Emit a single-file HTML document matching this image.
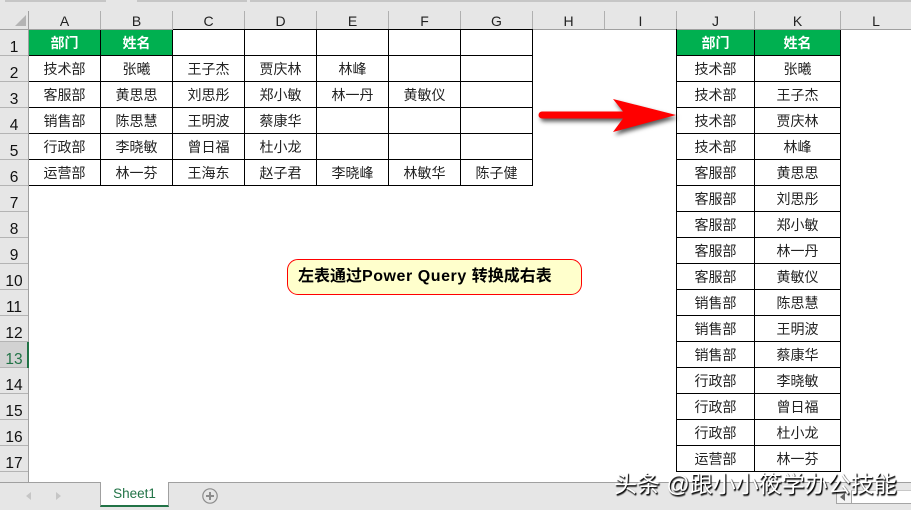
<!DOCTYPE html>
<html><head><meta charset="utf-8"><style>
html,body{margin:0;padding:0;width:911px;height:510px;overflow:hidden;background:#fff}
body{position:relative;font-family:"Liberation Sans","Noto Sans CJK SC",sans-serif;color:#222}
.a{position:absolute}
.ch{position:absolute;top:11px;height:18px;line-height:20px;font-size:14px;text-align:center;border-right:1px solid #b0b0b0;box-sizing:border-box;color:#222}
.rh{position:absolute;left:0;width:28px;height:26px;box-sizing:border-box;border-bottom:1px solid #b4b4b4;font-size:15.5px;text-align:center;line-height:36px;color:#111;overflow:hidden}
table{position:absolute;border-collapse:separate;border-spacing:0;table-layout:fixed;font-size:14px;text-align:center}
td{height:23px;padding:2px 0 0;border-right:1px solid #000;border-bottom:1px solid #000;box-sizing:content-box;line-height:23px;overflow:hidden;white-space:nowrap;color:#222}
td.g{background:#00b050;color:#fff;font-weight:700}
.seg{position:absolute;top:0;height:2px;background:#c6c6c6}
</style></head><body>
<div class="a" style="left:0;top:0;width:911px;height:29px;background:#e6e6e6"></div>
<div class="seg" style="left:5px;width:101px"></div>
<div class="seg" style="left:137px;width:110px"></div>
<div class="seg" style="left:250px;width:661px"></div>
<div class="a" style="left:0;top:29px;width:28px;height:453px;background:#e6e6e6"></div>
<div class="a" style="left:28px;top:11px;width:1px;height:471px;background:#a0a0a0"></div>
<div class="a" style="left:0;top:29px;width:911px;height:1px;background:#a0a0a0"></div>
<svg class="a" style="left:0;top:0" width="28" height="29"><polygon points="15,26 26,15 26,26" fill="#b4b4b4"/></svg>
<div class="ch" style="left:29px;width:72px">A</div>
<div class="ch" style="left:101px;width:72px">B</div>
<div class="ch" style="left:173px;width:72px">C</div>
<div class="ch" style="left:245px;width:72px">D</div>
<div class="ch" style="left:317px;width:72px">E</div>
<div class="ch" style="left:389px;width:72px">F</div>
<div class="ch" style="left:461px;width:72px">G</div>
<div class="ch" style="left:533px;width:72px">H</div>
<div class="ch" style="left:605px;width:72px">I</div>
<div class="ch" style="left:677px;width:78px">J</div>
<div class="ch" style="left:755px;width:86px">K</div>
<div class="ch" style="left:841px;width:70px;border:0">L</div>
<div class="rh" style="top:30px">1</div>
<div class="rh" style="top:56px">2</div>
<div class="rh" style="top:82px">3</div>
<div class="rh" style="top:108px">4</div>
<div class="rh" style="top:134px">5</div>
<div class="rh" style="top:160px">6</div>
<div class="rh" style="top:186px">7</div>
<div class="rh" style="top:212px">8</div>
<div class="rh" style="top:238px">9</div>
<div class="rh" style="top:264px">10</div>
<div class="rh" style="top:290px">11</div>
<div class="rh" style="top:316px">12</div>
<div class="rh" style="top:342px;background:#d2d2d2;color:#217346">13</div>
<div class="a" style="left:27px;top:342px;width:2px;height:26px;background:#217346"></div>
<div class="rh" style="top:368px">14</div>
<div class="rh" style="top:394px">15</div>
<div class="rh" style="top:420px">16</div>
<div class="rh" style="top:446px">17</div>

<div class="a" style="left:173px;top:29px;width:360px;height:1px;background:#000"></div>
<table style="left:29px;top:30px;width:504px">
<colgroup><col style="width:72px"><col style="width:72px"><col style="width:72px"><col style="width:72px"><col style="width:72px"><col style="width:72px"><col style="width:72px"></colgroup>
<tr><td class="g">部门</td><td class="g">姓名</td><td></td><td></td><td></td><td></td><td></td></tr>
<tr><td>技术部</td><td>张曦</td><td>王子杰</td><td>贾庆林</td><td>林峰</td><td></td><td></td></tr>
<tr><td>客服部</td><td>黄思思</td><td>刘思彤</td><td>郑小敏</td><td>林一丹</td><td>黄敏仪</td><td></td></tr>
<tr><td>销售部</td><td>陈思慧</td><td>王明波</td><td>蔡康华</td><td></td><td></td><td></td></tr>
<tr><td>行政部</td><td>李晓敏</td><td>曾日福</td><td>杜小龙</td><td></td><td></td><td></td></tr>
<tr><td>运营部</td><td>林一芬</td><td>王海东</td><td>赵子君</td><td>李晓峰</td><td>林敏华</td><td>陈子健</td></tr>
</table>

<div class="a" style="left:676px;top:29px;width:1px;height:443px;background:#000"></div>
<table style="left:677px;top:30px;width:164px">
<colgroup><col style="width:78px"><col style="width:86px"></colgroup>
<tr><td class="g">部门</td><td class="g">姓名</td></tr>
<tr><td>技术部</td><td>张曦</td></tr>
<tr><td>技术部</td><td>王子杰</td></tr>
<tr><td>技术部</td><td>贾庆林</td></tr>
<tr><td>技术部</td><td>林峰</td></tr>
<tr><td>客服部</td><td>黄思思</td></tr>
<tr><td>客服部</td><td>刘思彤</td></tr>
<tr><td>客服部</td><td>郑小敏</td></tr>
<tr><td>客服部</td><td>林一丹</td></tr>
<tr><td>客服部</td><td>黄敏仪</td></tr>
<tr><td>销售部</td><td>陈思慧</td></tr>
<tr><td>销售部</td><td>王明波</td></tr>
<tr><td>销售部</td><td>蔡康华</td></tr>
<tr><td>行政部</td><td>李晓敏</td></tr>
<tr><td>行政部</td><td>曾日福</td></tr>
<tr><td>行政部</td><td>杜小龙</td></tr>
<tr><td>运营部</td><td>林一芬</td></tr>
</table>

<svg class="a" style="left:530px;top:90px;filter:drop-shadow(2px 3px 2px rgba(0,0,0,.65))" width="155" height="52">
<path d="M12 21.5H93L83 9L146 25L83 42L93 28.5H12A3.5 3.5 0 0 1 12 21.5Z" fill="#f00"/>
</svg>

<div class="a" style="left:287px;top:259px;width:293px;height:34px;background:#ffffcc;border:1px solid #f00;border-radius:11px;font-size:16px;font-weight:700;line-height:33px;color:#000;white-space:nowrap;text-indent:10px">左表通过<span style="letter-spacing:.55px">Power Query </span>转换成右表</div>

<div class="a" style="left:0;top:482px;width:911px;height:28px;background:#e6e6e6;border-top:1px solid #a0a0a0;box-sizing:border-box"></div>
<svg class="a" style="left:20px;top:488px" width="50" height="16"><polygon points="6,8 11,4 11,12" fill="#c6c6c6"/><polygon points="36,4 41,8 36,12" fill="#c6c6c6"/></svg>
<div class="a" style="left:100px;top:482px;width:69px;height:25px;background:#fff;border-left:1px solid #a0a0a0;border-right:1px solid #a0a0a0;border-bottom:2px solid #217346;box-sizing:border-box;text-align:center;font-size:13.5px;line-height:24px;color:#217346">Sheet1</div>
<svg class="a" style="left:201px;top:487px" width="18" height="18"><circle cx="9" cy="9" r="7.2" fill="none" stroke="#8c8c8c" stroke-width="1.2"/><path d="M9 5V13M5 9H13" stroke="#8c8c8c" stroke-width="2"/></svg>
<div class="a" style="left:851px;top:490px;width:60px;height:14px;background:#fff;border-left:1px solid #a6a6a6;border-bottom:1px solid #a6a6a6;border-top:1px solid #c8c8c8;box-sizing:border-box"></div>
<div class="a" style="left:836px;top:490px;width:15px;height:14px;border-left:1px solid #a6a6a6;border-bottom:1px solid #a6a6a6;box-sizing:border-box;background:#f4f4f4"></div>
<svg class="a" style="left:838px;top:492px" width="10" height="10"><polygon points="2,5 7,1 7,9" fill="#666"/></svg>

<div class="a" style="left:614px;top:469px;font-size:23px;line-height:30px;color:#fff;white-space:nowrap;text-shadow:1px 1px 1px #000,1px 2px 1px rgba(0,0,0,.6)">头条 @跟小小筱学办公技能</div>
</body></html>
